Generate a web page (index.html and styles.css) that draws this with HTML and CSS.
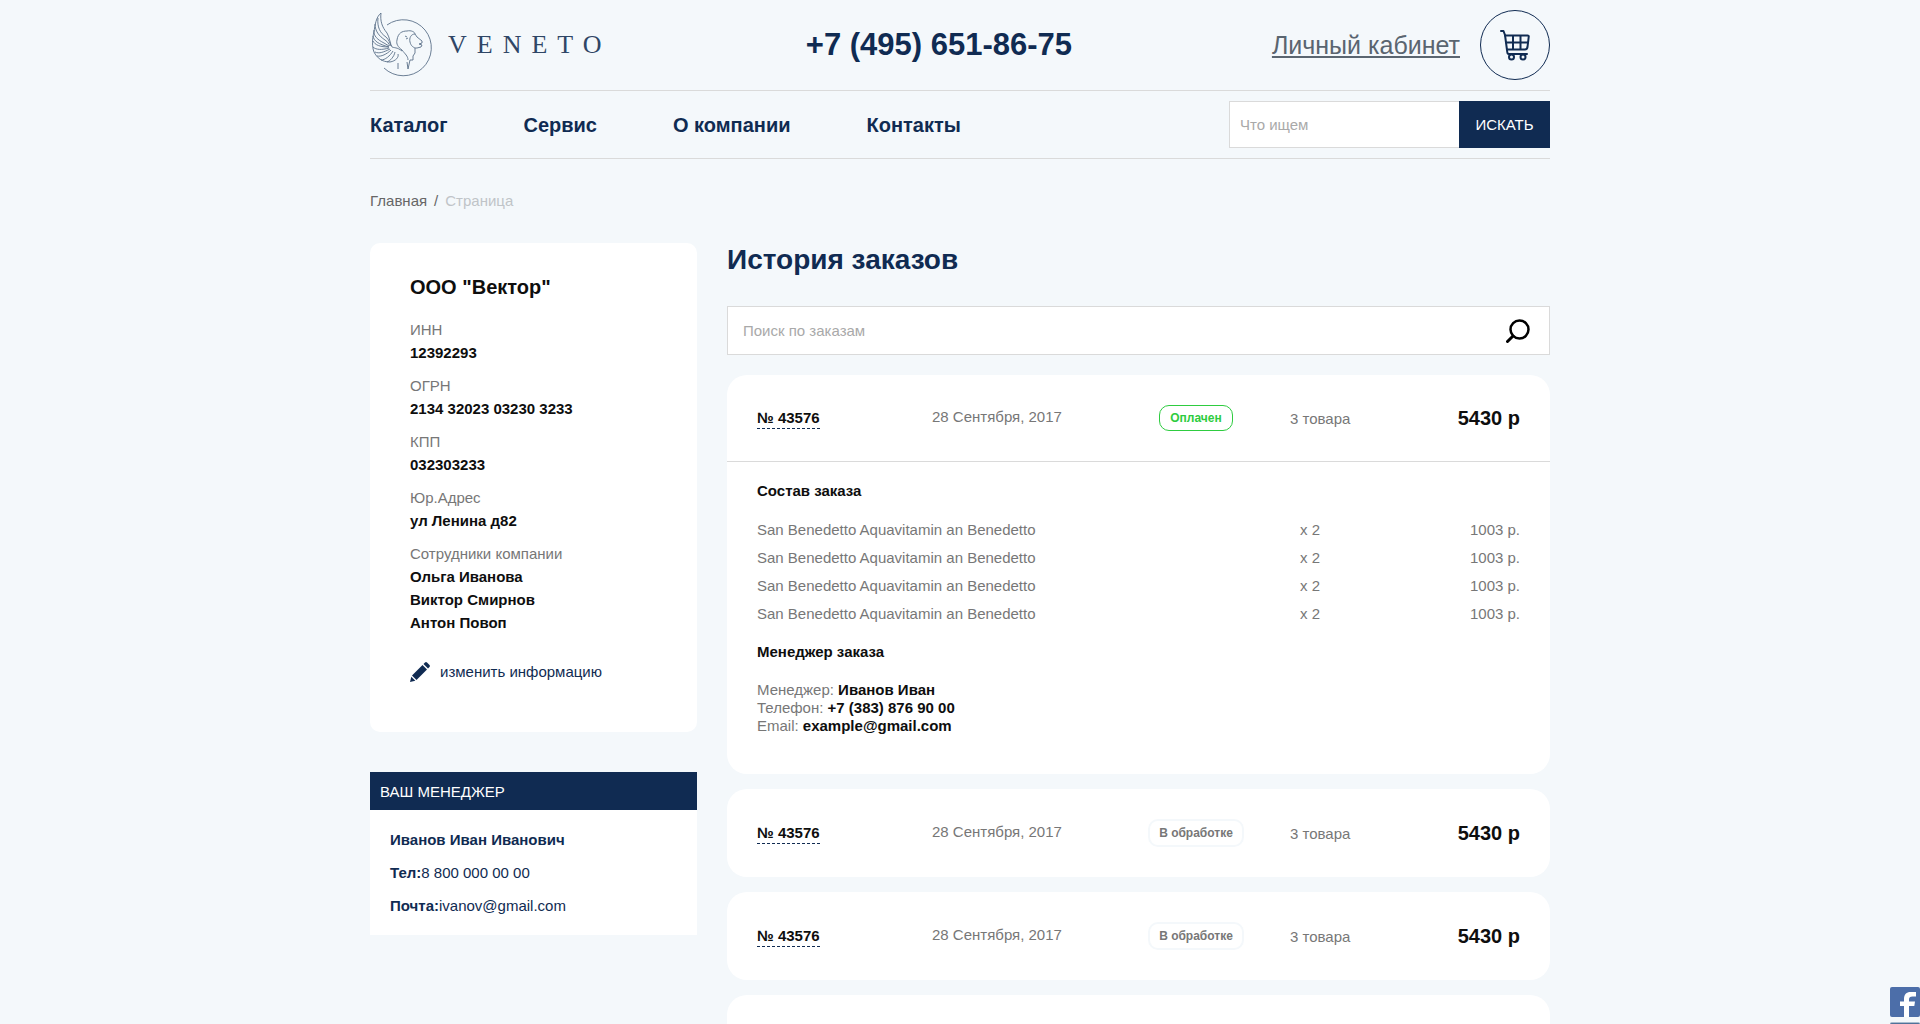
FILE: index.html
```html
<!DOCTYPE html>
<html lang="ru">
<head>
<meta charset="utf-8">
<meta name="viewport" content="width=device-width, initial-scale=1">
<title>История заказов</title>
<link rel="stylesheet" href="styles.css">
</head>
<body>
<div class="container">
  <header>
    <div class="top">
      <a class="logo" href="#">
        <svg class="logo-mark" viewBox="0 0 62 64" width="62" height="64" fill="none" stroke="#5b7089" stroke-width="0.9" aria-hidden="true">
          <path d="M17 12 A28 28 0 1 1 14 55"/>
          <path d="M11 0 C6 4 5 12 4 19 C2 26 2 34 4 39 C7 45 12 49 20 49 C26 48 29 44 28 41"/>
          <path d="M11 0 C10 8 12 14 17 20 C20 25 20 31 22 34 C24 35 27 34 32 38"/>
          <path d="M8 5 C7 14 10 20 16 24 C19 27 20 30 21 33"/>
          <path d="M5 11 C5 18 9 23 15 27 C18 29 19 31 20 33"/>
          <path d="M4 17 C3 23 8 27 14 30 L19 33"/>
          <path d="M3 23 C4 28 8 31 19 34"/>
          <path d="M3 28 C5 32 10 34 19 34"/>
          <path d="M3 34 C6 37 12 37 19 35"/>
          <path d="M5 39 C9 41 14 39 20 36"/>
          <path d="M7 43 C11 44 17 41 21 37"/>
          <path d="M11 47 C15 47 20 43 23 38"/>
          <path d="M17 49 C20 48 24 44 25 39"/>
          <path d="M38 47 C38 43 35 41 32 37 C28 34 26 31 27 27 C28 20 32 18 37 18 C41 17 45 19 45 21"/>
          <path d="M35 23 L37 24 M36 26 L38 25"/>
          <path d="M40 29 C39 25 41 21 45 21 L47 24 L52 28 V30 L49 31 L52 32 L51 34 L47 35 L45 35 V40 L43 43 V47 L40 47 L38 56 L37 49 M40 29 C41 33 43 34 45 35"/>
          <path d="M28 50 V56"/>
        </svg>
        <span class="logo-name">VENETO</span>
      </a>
      <a class="phone" href="tel:+74956518675">+7 (495) 651-86-75</a>
      <div class="account">
        <a class="account-link" href="#">Личный кабинет</a>
        <a class="cart" href="#" aria-label="Корзина">
          <svg viewBox="0 0 32 32" width="32" height="32" fill="none" stroke="#102b52" stroke-width="2" stroke-linecap="round" stroke-linejoin="round" aria-hidden="true">
            <path d="M2 2 H4.500 L6 6 L8 21 C8.300 24.500 8.500 25 10 25 H28"/>
            <path d="M6 6.500 H28.500 Q30 6.500 29.700 8 L28.500 18 Q28 20.500 26 20.500 H8"/>
            <path d="M7 13.500 H29 M14 7 V20 M21.500 7 V20"/>
            <circle cx="12.500" cy="28" r="2.500"/><circle cx="24" cy="28" r="2.500"/>
          </svg>
        </a>
      </div>
    </div>
    <div class="bar">
      <nav class="menu">
        <a href="#">Каталог</a>
        <a href="#">Сервис</a>
        <a href="#">О компании</a>
        <a href="#">Контакты</a>
      </nav>
      <form class="site-search">
        <input type="search" placeholder="Что ищем" aria-label="Что ищем">
        <button type="button">ИСКАТЬ</button>
      </form>
    </div>
  </header>

  <nav class="crumbs" aria-label="Навигация">
    <a href="#">Главная</a><span>/</span><span class="current">Страница</span>
  </nav>

  <div class="columns">
    <aside class="side">
      <section class="company">
        <h2>ООО "Вектор"</h2>
        <dl>
          <dt>ИНН</dt><dd>12392293</dd>
          <dt>ОГРН</dt><dd>2134 32023 03230 3233</dd>
          <dt>КПП</dt><dd>032303233</dd>
          <dt>Юр.Адрес</dt><dd>ул Ленина д82</dd>
          <dt>Сотрудники компании</dt><dd>Ольга Иванова</dd><dd>Виктор Смирнов</dd><dd>Антон Повоп</dd>
        </dl>
        <a class="edit" href="#">
          <svg viewBox="0 0 20 20" width="20" height="20" fill="#102b52" aria-hidden="true">
            <path d="M12.500 3 L17 7.500 L6.500 18 L2 13.500 Z"/>
            <path d="M13.500 2 L15 0.500 Q16 -0.300 17 0.500 L19.500 3 Q20.300 4 19.500 5 L18 6.500 Z"/>
            <path d="M1.300 14.700 L5.300 18.700 L0 20 Z"/>
          </svg>
          изменить информацию
        </a>
      </section>
      <section class="manager">
        <h2>ВАШ МЕНЕДЖЕР</h2>
        <div class="manager-body">
          <p><b>Иванов Иван Иванович</b></p>
          <p><b>Тел:</b>8 800 000 00 00</p>
          <p><b>Почта:</b>ivanov@gmail.com</p>
        </div>
      </section>
    </aside>

    <main class="orders">
      <h1>История заказов</h1>
      <form class="order-search">
        <input type="search" placeholder="Поиск по заказам" aria-label="Поиск по заказам">
        <button type="button" aria-label="Найти">
          <svg viewBox="0 0 24 24" width="24" height="24" fill="none" stroke="#000" aria-hidden="true">
            <circle cx="13.500" cy="10.500" r="9" stroke-width="2.500"/>
            <path d="M7 17 L1.500 22.500" stroke-width="3" stroke-linecap="round"/>
          </svg>
        </button>
      </form>

      <article class="order">
        <div class="order-head open">
          <a class="number" href="#">№ 43576</a>
          <time class="date" datetime="2017-09-28">28 Сентября, 2017</time>
          <span class="status paid">Оплачен</span>
          <span class="count">3 товара</span>
          <span class="total">5430 р</span>
        </div>
        <div class="order-body">
          <h3>Состав заказа</h3>
          <table class="goods">
            <tr><td>San Benedetto Aquavitamin an Benedetto</td><td class="qty">x 2</td><td class="price">1003 р.</td></tr>
            <tr><td>San Benedetto Aquavitamin an Benedetto</td><td class="qty">x 2</td><td class="price">1003 р.</td></tr>
            <tr><td>San Benedetto Aquavitamin an Benedetto</td><td class="qty">x 2</td><td class="price">1003 р.</td></tr>
            <tr><td>San Benedetto Aquavitamin an Benedetto</td><td class="qty">x 2</td><td class="price">1003 р.</td></tr>
          </table>
          <h3>Менеджер заказа</h3>
          <div class="contact">
            <p>Менеджер: <b>Иванов Иван</b></p>
            <p>Телефон: <b>+7 (383) 876 90 00</b></p>
            <p>Email: <b>example@gmail.com</b></p>
          </div>
        </div>
      </article>

      <article class="order">
        <div class="order-head">
          <a class="number" href="#">№ 43576</a>
          <time class="date" datetime="2017-09-28">28 Сентября, 2017</time>
          <span class="status">В обработке</span>
          <span class="count">3 товара</span>
          <span class="total">5430 р</span>
        </div>
      </article>
      <article class="order">
        <div class="order-head">
          <a class="number" href="#">№ 43576</a>
          <time class="date" datetime="2017-09-28">28 Сентября, 2017</time>
          <span class="status">В обработке</span>
          <span class="count">3 товара</span>
          <span class="total">5430 р</span>
        </div>
      </article>
      <article class="order">
        <div class="order-head">
          <a class="number" href="#">№ 43576</a>
          <time class="date" datetime="2017-09-28">28 Сентября, 2017</time>
          <span class="status">В обработке</span>
          <span class="count">3 товара</span>
          <span class="total">5430 р</span>
        </div>
      </article>
    </main>
  </div>
</div>

<div class="social">
  <a class="facebook" href="#" aria-label="Facebook">
    <svg viewBox="0 0 30 30" width="30" height="30" aria-hidden="true">
      <path fill="#fff" d="M14 30 V19 H10 V14.500 H14 V12 C14 7.500 16.500 5 20.500 5 H26 V9.500 H22.500 C20 9.500 19 10.500 19 12.500 V14.500 H25 L24.300 19 H19 V30 Z"/>
    </svg>
  </a>
  <a class="vk" href="#" aria-label="ВКонтакте"></a>
</div>
</body>
</html>
```
FILE: styles.css
```css
* {
  box-sizing: border-box;
}

body {
  margin: 0;
  background: #f4f8fb;
  color: #0e0e0e;
  font: 15px/23px "Liberation Sans", Arial, sans-serif;
}

h1, h2, h3, p, dl, dd {
  margin: 0;
}

a {
  color: inherit;
  text-decoration: none;
}

input, button {
  font: inherit;
  border-radius: 0;
  appearance: none;
}

input::placeholder {
  color: #a9a9a9;
}

.container {
  max-width: 1180px;
  margin: 0 auto;
  padding-bottom: 40px;
}

/* header */
.top {
  display: flex;
  align-items: center;
  justify-content: space-between;
  padding: 10px 0;
  border-bottom: 1px solid #dadada;
}

.logo {
  display: flex;
  align-items: center;
  gap: 16px;
  width: 236px;
}

.logo-mark {
  flex: none;
}

.logo-name {
  color: #2f4666;
  font: 26px/32px "Liberation Serif", serif;
  letter-spacing: 10px;
}

.phone {
  color: #102b52;
  font-size: 31px;
  line-height: 36px;
  font-weight: bold;
}

.account {
  display: flex;
  align-items: center;
  gap: 20px;
}

.account-link {
  color: #5a6570;
  font-size: 25px;
  line-height: 32px;
  text-decoration: underline;
}

.cart {
  display: flex;
  align-items: center;
  justify-content: center;
  width: 70px;
  height: 70px;
  border: 1px solid #102b52;
  border-radius: 50%;
}

.bar {
  display: flex;
  align-items: center;
  justify-content: space-between;
  padding: 10px 0;
  border-bottom: 1px solid #dadada;
}

.menu {
  display: flex;
  gap: 76px;
  padding-top: 2px;
  color: #102b52;
  font-size: 20px;
  font-weight: bold;
}

.site-search {
  display: flex;
}

.site-search input {
  width: 230px;
  height: 47px;
  padding: 0 10px;
  border: 1px solid #dadada;
  border-right: 0;
  background: #fff;
}

.site-search button {
  width: 91px;
  padding: 0;
  border: 0;
  background: #102b52;
  color: #fff;
}

.crumbs {
  display: flex;
  gap: 7px;
  padding: 30px 0 31px;
  color: #666;
}

.crumbs .current {
  color: #c0c4c8;
}

/* columns */
.columns {
  display: grid;
  grid-template-columns: 327px 1fr;
  align-items: start;
  gap: 30px;
}

.side {
  display: grid;
  gap: 40px;
}

.company {
  padding: 33px 40px 49px;
  border-radius: 10px;
  background: #fff;
}

.company h2 {
  padding-bottom: 19px;
  font-size: 20px;
}

.company dt {
  color: #777;
}

.company dd {
  font-weight: bold;
}

.company dd + dt {
  margin-top: 10px;
}

.edit {
  display: flex;
  align-items: center;
  gap: 10px;
  margin-top: 26px;
  color: #102b52;
}

.manager {
  background: #fff;
  color: #102b52;
}

.manager h2 {
  padding: 8px 10px 7px;
  background: #102b52;
  color: #fff;
  font-size: 15px;
  font-weight: normal;
}

.manager-body {
  display: grid;
  gap: 10px;
  padding: 18px 20px;
}

/* orders */
.orders {
  display: grid;
  gap: 15px;
}

.orders h1 {
  padding-bottom: 14px;
  color: #102b52;
  font-size: 28px;
  line-height: 34px;
}

.order-search {
  display: flex;
  align-items: center;
  height: 49px;
  margin-bottom: 5px;
  padding-right: 19px;
  border: 1px solid #dadada;
  background: #fff;
}

.order-search input {
  flex: 1;
  height: 100%;
  padding: 0 15px;
  border: 0;
  background: none;
}

.order-search button {
  display: flex;
  padding: 0;
  border: 0;
  background: none;
}

.order {
  border-radius: 20px;
  background: #fff;
}

.order-head {
  display: grid;
  grid-template-columns: 175px 190px 148px 1fr auto;
  align-items: center;
  min-height: 88px;
  padding: 0 30px;
}

.order-head.open {
  min-height: 86px;
}

.number {
  justify-self: start;
  border-bottom: 1px dashed #102b52;
  font-weight: bold;
  line-height: 20px;
}

.date, .count {
  color: #777;
}

.date {
  padding-bottom: 4px;
}

.status {
  justify-self: center;
  padding: 0 9px;
  border: 2px solid #f4f8fb;
  border-radius: 10px;
  color: #777;
  font-size: 12px;
  line-height: 24px;
  font-weight: bold;
}

.paid {
  padding: 0 10px;
  border: 1px solid #2ecc40;
  color: #2ecc40;
}

.count {
  padding-left: 20px;
}

.total {
  font-size: 20px;
  font-weight: bold;
}

.order-body {
  padding: 17px 30px 39px;
  border-top: 1px solid #dadada;
}

.order-body h3 {
  padding-bottom: 13px;
  font-size: 15px;
}

.goods {
  width: 100%;
  margin-bottom: 13px;
  border-collapse: collapse;
  color: #777;
}

.goods td {
  height: 28px;
  padding: 0;
}

.goods .qty {
  width: 120px;
}

.goods .price {
  width: 100px;
  text-align: right;
}

.contact {
  padding-top: 5px;
  color: #777;
  line-height: 18px;
}

.contact b {
  color: #0e0e0e;
}

/* social links on the window's edge */
.social {
  position: fixed;
  right: 0;
  bottom: -28px;
  display: grid;
  gap: 5px;
}

.social a {
  width: 30px;
  height: 30px;
  border-radius: 2px;
}

.facebook {
  background: #4c6ea9;
}

.facebook svg {
  display: block;
}

.vk {
  border-top: 1px solid #a9bccf;
  background: #507299;
}
```
